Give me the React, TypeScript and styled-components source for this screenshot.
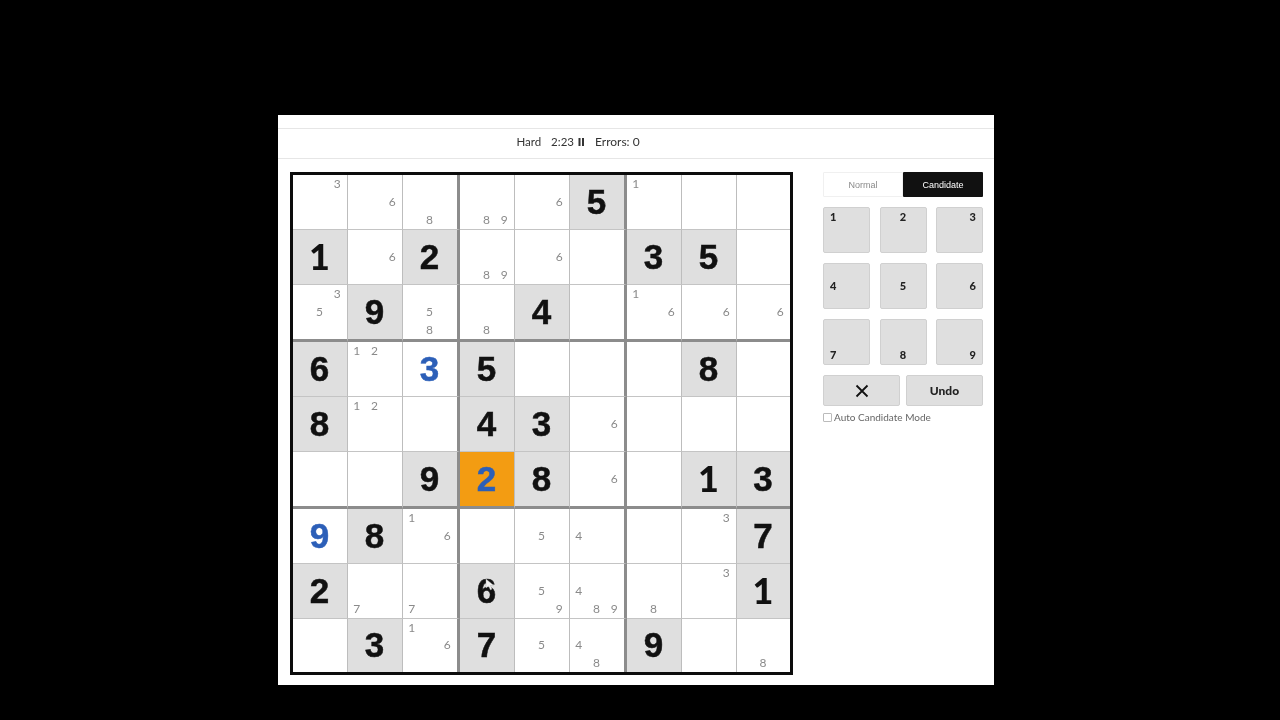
import React from 'react';
import styled, { createGlobalStyle } from 'styled-components';

const GlobalStyle = createGlobalStyle`
html, body {
  margin: 0;
  height: 100%;
  background: #000;
}
#root {
  height: 100%;
}
`;

const Page = styled.div`
width: 1280px;
height: 720px;
background: #000;
display: flex;
align-items: flex-start;
justify-content: center;
padding-top: 115px;
padding-right: 8px;
box-sizing: border-box;
font-family: 'Liberation Sans', Arial, sans-serif;`;

const Panel = styled.div`
width: 716px;
height: 570px;
background: #fff;
display: flex;
flex-direction: column;
filter: blur(0.35px);`;

const TopStrip = styled.div`
height: 13px;
border-bottom: 1px solid #e6e6e6;`;

const StatusBar = styled.div`
height: 29px;
box-sizing: content-box;
border-bottom: 1px solid #e6e6e6;
display: flex;
align-items: center;
justify-content: center;
padding-right: 116px;
font-family: Lato, 'Liberation Sans', sans-serif;
font-size: 11.5px;
color: #333;`;

const StatusText = styled.div`
display: flex;
align-items: center;
margin-bottom: 4px;`;

const Level = styled.span`
margin-right: 10px;`;

const Timer = styled.span`
display: flex;
align-items: center;
gap: 4px;
margin-right: 10px;
font-size: 11.5px;`;

const Errors = styled.span`
font-size: 12px;`;

const Content = styled.div`
display: flex;
align-items: flex-start;
padding: 13px 11px 0 12px;
justify-content: space-between;`;

const Board = styled.div`
width: 503px;
height: 503px;
box-sizing: border-box;
border: 3px solid #0c0c0c;
display: grid;
grid-template-columns: 55px 55px 57px 55px 55px 57px 55px 55px 53px;
grid-template-rows: 55px 55px 57px 55px 55px 57px 55px 55px 53px;`;

const Cell = styled.div<{ $row: number; $col: number; $given: boolean; $selected: boolean }>`
position: relative;
min-width: 0;
min-height: 0;
box-sizing: border-box;
background: ${(p) => (p.$selected ? '#f39c12' : p.$given ? '#dfdfdf' : '#fff')};
border-right: ${(p) => (p.$col === 8 ? 'none' : p.$col % 3 === 2 ? '3px solid #8c8c8c' : '1px solid #bdbdbd')};
border-bottom: ${(p) => (p.$row === 8 ? 'none' : p.$row % 3 === 2 ? '3px solid #8c8c8c' : '1px solid #c4c4c4')};
display: flex;
align-items: center;
justify-content: center;`;

const Digit = styled.span<{ $player: boolean; $value: number }>`
font-family: ${(p) => (p.$value === 1 ? 'Lato, ' : '')}'Liberation Sans', sans-serif;
font-weight: ${(p) => (p.$value === 1 ? 900 : 700)};
font-size: ${(p) => (p.$value === 1 ? 36 : 35)}px;
line-height: 1;
margin: 0 1px 2px 0;
-webkit-text-stroke: ${(p) => (p.$value === 1 ? 0 : 0.5)}px currentColor;
color: ${(p) => (p.$player ? '#2c5fb8' : '#111')};`;

const Candidates = styled.div`
width: 100%;
height: 100%;
padding: 0 1px 1px 0;
box-sizing: border-box;
display: grid;
grid-template-columns: repeat(3, 1fr);
grid-template-rows: repeat(3, 1fr);`;

const Candidate = styled.span<{ $value: number }>`
grid-column: ${(p) => ((p.$value - 1) % 3) + 1};
grid-row: ${(p) => Math.floor((p.$value - 1) / 3) + 1};
display: flex;
align-items: center;
justify-content: center;
font-family: Lato, 'Liberation Sans', sans-serif;
font-size: 12px;
color: #8a8a8a;`;

const Cursor = styled.svg`
position: absolute;
left: 25px;
top: 14px;`;

const Side = styled.div`
width: 160px;
display: flex;
flex-direction: column;`;

const ModeToggle = styled.div`
display: grid;
grid-template-columns: 1fr 1fr;
height: 25px;
margin-bottom: 10px;`;

const ModeButton = styled.div<{ $active: boolean }>`
display: flex;
align-items: center;
justify-content: center;
font-size: 9px;
border-radius: 1px;
background: ${(p) => (p.$active ? '#111' : '#fff')};
color: ${(p) => (p.$active ? '#fff' : '#8a8a8a')};
border: ${(p) => (p.$active ? 'none' : '1px solid #f0f0f0')};`;

const Keypad = styled.div`
display: grid;
grid-template-columns: 47px 47px 47px;
grid-auto-rows: 46px;
justify-content: space-between;
row-gap: 10px;
margin-bottom: 10px;`;

const Key = styled.div<{ $value: number }>`
box-sizing: border-box;
padding: 2px 6px 3px;
background: #dfdfdf;
border: 1px solid #d0d0d0;
border-radius: 2px;
display: flex;
font-family: Lato, 'Liberation Sans', sans-serif;
font-size: 11px;
font-weight: 900;
color: #222;
justify-content: ${(p) => ['flex-start', 'center', 'flex-end'][(p.$value - 1) % 3]};
align-items: ${(p) => ['flex-start', 'center', 'flex-end'][Math.floor((p.$value - 1) / 3)]};`;

const Actions = styled.div`
display: grid;
grid-template-columns: 77px 77px;
justify-content: space-between;
height: 31px;`;

const ActionButton = styled.div`
background: #dfdfdf;
border: 1px solid #d0d0d0;
border-radius: 2px;
display: flex;
align-items: center;
justify-content: center;
font-family: Lato, 'Liberation Sans', sans-serif;
font-size: 12px;
font-weight: 900;
color: #222;`;

const AutoMode = styled.label`
display: flex;
align-items: center;
gap: 2px;
margin-top: 5px;
font-family: Lato, 'Liberation Sans', sans-serif;
font-size: 10px;
color: #666;`;

const CheckBox = styled.span`
width: 7px;
height: 7px;
border: 1px solid #bbb;
border-radius: 1px;`;

interface CellData {
  value?: number;
  player?: boolean;
  selected?: boolean;
  notes?: number[];
}

const g = (value: number): CellData => ({ value });
const p = (value: number, selected = false): CellData => ({ value, player: true, selected });
const n = (...notes: number[]): CellData => ({ notes });
const e: CellData = {};

const puzzle: CellData[][] = [
  [n(3), n(6), n(8), n(8, 9), n(6), g(5), n(1), e, e],
  [g(1), n(6), g(2), n(8, 9), n(6), e, g(3), g(5), e],
  [n(3, 5), g(9), n(5, 8), n(8), g(4), e, n(1, 6), n(6), n(6)],
  [g(6), n(1, 2), p(3), g(5), e, e, e, g(8), e],
  [g(8), n(1, 2), e, g(4), g(3), n(6), e, e, e],
  [e, e, g(9), p(2, true), g(8), n(6), e, g(1), g(3)],
  [p(9), g(8), n(1, 6), e, n(5), n(4), e, n(3), g(7)],
  [g(2), n(7), n(7), g(6), n(5, 9), n(4, 8, 9), n(8), n(3), g(1)],
  [e, g(3), n(1, 6), g(7), n(5), n(4, 8), g(9), e, n(8)],
];

export default function App(): JSX.Element {
  return (
    <React.Fragment>
      <GlobalStyle />
      <Page>
        <Panel>
          <TopStrip />
          <StatusBar>
            <StatusText>
              <Level>Hard</Level>
              <Timer>
                2:23
                <svg width='7' height='8' viewBox='0 0 7 8'>
                  <rect x='0.5' y='0' width='2' height='8' fill='#333' />
                  <rect x='4' y='0' width='2' height='8' fill='#333' />
                </svg>
              </Timer>
              <Errors>Errors: 0</Errors>
            </StatusText>
          </StatusBar>
          <Content>
            <Board>
              {puzzle.map((row, r) =>
                row.map((cell, c) => (
                  <Cell
                    key={`${r}-${c}`}
                    $row={r}
                    $col={c}
                    $given={cell.value !== undefined && !cell.player}
                    $selected={!!cell.selected}
                  >
                    {cell.value !== undefined && (
                      <Digit $player={!!cell.player} $value={cell.value}>{cell.value}</Digit>
                    )}
                    {cell.notes && (
                      <Candidates>
                        {cell.notes.map((note) => (
                          <Candidate key={note} $value={note}>{note}</Candidate>
                        ))}
                      </Candidates>
                    )}
                    {r === 7 && c === 3 && (
                      <Cursor width='10' height='13' viewBox='0 0 10 13'>
                        <path d='M1 1 L1 10 L3.5 8 L5.5 12 L7 11 L5.2 7.5 L8.5 7.2 Z' fill='#f2f2f2' stroke='#aaa' strokeWidth='0.4' />
                      </Cursor>
                    )}
                  </Cell>
                ))
              )}
            </Board>
            <Side>
              <ModeToggle>
                <ModeButton $active={false}>Normal</ModeButton>
                <ModeButton $active>Candidate</ModeButton>
              </ModeToggle>
              <Keypad>
                {[1, 2, 3, 4, 5, 6, 7, 8, 9].map((value) => (
                  <Key key={value} $value={value}>{value}</Key>
                ))}
              </Keypad>
              <Actions>
                <ActionButton>
                  <svg width='14' height='14' viewBox='0 0 14 14'>
                    <path d='M1.5 1.5 L12.5 12.5 M12.5 1.5 L1.5 12.5' stroke='#111' strokeWidth='1.8' fill='none' />
                  </svg>
                </ActionButton>
                <ActionButton>Undo</ActionButton>
              </Actions>
              <AutoMode>
                <CheckBox />
                Auto Candidate Mode
              </AutoMode>
            </Side>
          </Content>
        </Panel>
      </Page>
    </React.Fragment>
  );
}
